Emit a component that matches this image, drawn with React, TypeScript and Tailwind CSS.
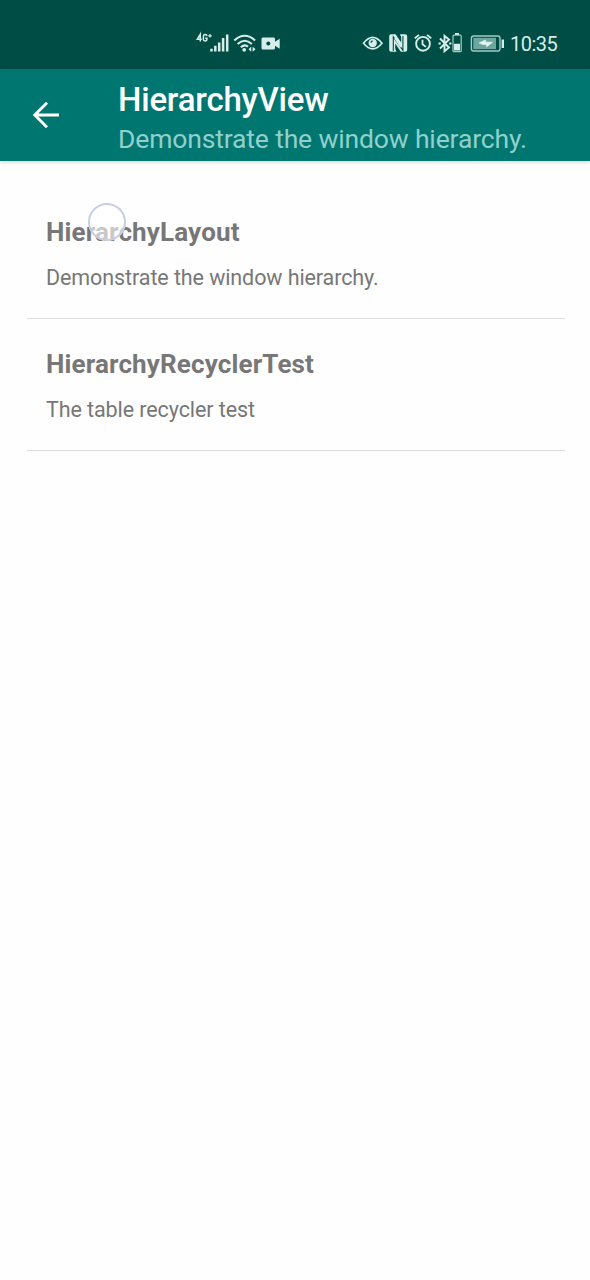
import React from "react";

function SignalIcons() {
  return (
    <svg className="h-8 w-[100px]" viewBox="190 28 100 32" fill="none" stroke="#d5eeea">
      <g strokeWidth="1.5">
        <path d="M200.3 41.6V34.3L197.3 39.3H201.8M207 36.2Q206.8 34.6 205.1 34.6Q203.4 34.6 203.4 36.3V39.3Q203.4 41 205.1 41Q206.9 41 206.9 39.3V38.2H205.2" />
        <path strokeWidth="1.2" d="M208.2 35.8H211.8M210 34V37.6" />
      </g>
      <path strokeWidth="2.5" d="M211.5 48.8V51.5M215.3 45.8V51.5M219.2 42.5V51.5M223.1 38V51.5M227.2 34.5V51.5" />
      <g strokeWidth="2.1">
        <path d="M234.3 40.5Q244.7 31 255.1 40.5M237.6 44Q244.7 37.5 251.8 44M240.8 47.2Q244.7 43.7 248 46.6" />
      </g>
      <circle cx="244.2" cy="49.8" r="1.9" fill="#d5eeea" stroke="none" />
      <path d="M248.5 49.3L251.2 46.8V51.8ZM255.6 49.3L252.6 46.8V51.8Z" fill="#d5eeea" stroke="none" />
      <path d="M263 37.6H273.5Q275 37.6 275 39V41.8L279.7 38.8V48.8L275 45.8V48Q275 49.5 273.5 49.5H263Q261.5 49.5 261.5 48V39Q261.5 37.6 263 37.6Z" fill="#d5eeea" stroke="none" />
      <circle cx="268.3" cy="43.5" r="2" fill="#004d45" stroke="none" />
    </svg>
  );
}

function DeviceIcons() {
  return (
    <svg className="h-8 w-[150px]" viewBox="358 28 150 32" fill="none" stroke="#d5eeea">
      <path strokeWidth="1.6" d="M363.5 43.2Q372.7 31.5 382 43.2Q372.7 54.5 363.5 43.2Z" />
      <circle cx="372.7" cy="43" r="4.2" fill="#d5eeea" stroke="none" />
      <path strokeWidth="1.2" stroke="#004d45" d="M370.9 42.7Q371.1 41.1 372.7 40.9" />
      <path fill="#d5eeea" stroke="none" d="M391 34.2H395.6L401.2 42.5V37.2L400 34.2H405.2Q407.2 34.2 407.2 36.2V49.8Q407.2 51.8 405.2 51.8H400.8L395.2 43.5V48.8L396.4 51.8H391Q389.2 51.8 389.2 49.8V36.2Q389.2 34.2 391 34.2Z" />
      <path strokeWidth="1.1" stroke="#004d45" d="M393.3 51V37L402.9 50.2V36" />
      <path strokeWidth="2.2" d="M395.2 37.8L401.2 47" />
      <circle cx="423" cy="43.8" r="6.9" strokeWidth="1.9" />
      <path strokeWidth="1.8" d="M414.8 38.3L419 34.9M427 34.9L431.2 38.3M422.5 39.7V44.3L425.9 46.9" />
      <path strokeWidth="1.9" d="M440 38.5L449 47.5L444.5 51.3V35.7L449 39.5L440 48.5" />
      <path fill="#d5eeea" stroke="none" d="M438.5 42.6H440.7V44.5H438.5ZM449.2 42.6H451.4V44.5H449.2ZM455 33H459V35H455ZM454 43.8H460V50.6H454Z" />
      <rect x="453" y="35.2" width="8.2" height="16.5" rx="1" strokeWidth="1.2" stroke="#a3cbc5" />
      <rect x="471.4" y="36" width="28.6" height="15" rx="2.2" strokeWidth="1.4" stroke="#a3cbc5" />
      <rect x="473.3" y="37.8" width="22.7" height="11.4" fill="#6da69f" stroke="none" />
      <path d="M479 43L485.5 40V42.2H492.5L486.5 46.9V44.5H483Z" fill="#e5f7f4" stroke="#e5f7f4" strokeWidth="0.6" />
      <path d="M502.8 39.5V48" strokeWidth="2.4" />
    </svg>
  );
}

function StatusBar() {
  return (
    <header className="flex h-[69px] bg-[#004d45] pt-7 pl-[190px] text-[#d5eeea]">
      <SignalIcons />
      <div className="ml-[68px] flex">
        <DeviceIcons />
        <span className="ml-0.5 text-[20px] leading-8 tracking-[-0.5px]">10:35</span>
      </div>
    </header>
  );
}

function AppBar() {
  return (
    <div className="flex h-[92px] bg-[#007671] shadow-[0_1px_4px_rgba(0,0,0,0.2)]">
      <button aria-label="Back" className="mt-[31px] ml-[31px] h-[30px] w-[30px]">
        <svg viewBox="0 0 30 30" fill="none" stroke="white" strokeWidth="2.9">
          <path d="M16 2.8L3.8 15L16 27.2M3.8 15H28" />
        </svg>
      </button>
      <div className="ml-[57px] whitespace-nowrap">
        <h1 className="mt-[11px] text-[33px] leading-10 font-medium tracking-[-0.22px] text-white">HierarchyView</h1>
        <p className="text-[26.5px] leading-[38px] tracking-[-0.15px] text-[#91d0cb]">Demonstrate the window hierarchy.</p>
      </div>
    </div>
  );
}

function DemoItem({ title, description }: { title: string; description: string }) {
  return (
    <li className="mr-[25px] ml-[27px] h-[132px] border-b border-[#dedede] px-[19px] pt-[29px] whitespace-nowrap text-[#777]">
      <h2 className="text-[26px] leading-8 font-bold tracking-[0.14px]">{title}</h2>
      <p className="mt-4 text-[21.5px] leading-7 tracking-[-0.09px]">{description}</p>
    </li>
  );
}

export default function App() {
  return (
    <div className="relative min-h-[1280px] w-full bg-[#fefefe] font-['Roboto',sans-serif]">
      <StatusBar />
      <AppBar />
      <ul className="pt-[26px]">
        <DemoItem title="HierarchyLayout" description="Demonstrate the window hierarchy." />
        <DemoItem title="HierarchyRecyclerTest" description="The table recycler test" />
      </ul>
      <span className="absolute top-[203px] left-[88px] h-[38px] w-[38px] rounded-full border-2 border-[#c8cde5] bg-white/60" />
    </div>
  );
}
